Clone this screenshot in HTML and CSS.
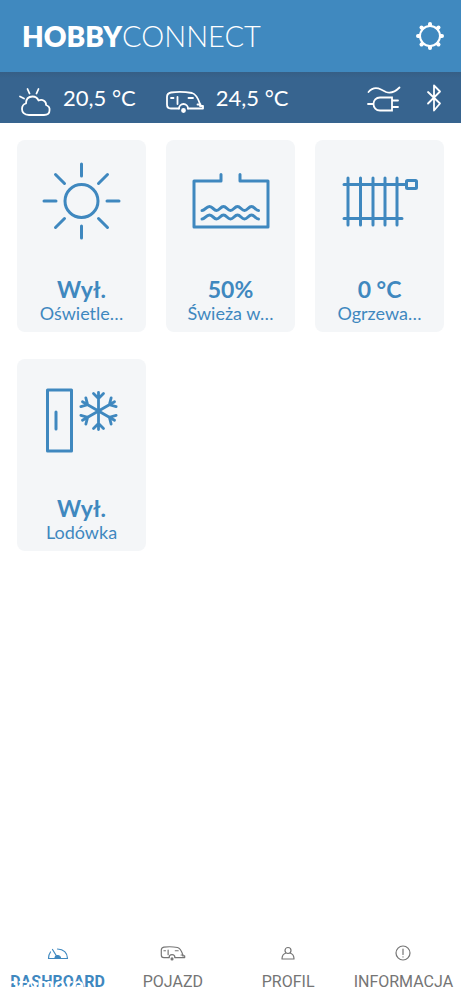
FILE: index.html
```html
<!DOCTYPE html>
<html lang="pl">
<head>
<meta charset="utf-8">
<meta name="viewport" content="width=device-width, initial-scale=1">
<title>HobbyConnect</title>
<link rel="stylesheet" href="styles.css">
</head>
<body>
<header class="topbar">
  <h1 class="brand"><b>HOBBY</b>CONNECT</h1>
  <button class="icon-button" type="button" aria-label="Ustawienia">
    <svg width="30" height="30" viewBox="0 0 30 30" fill="none" stroke="currentColor" stroke-linecap="round">
      <circle cx="15" cy="15" r="10" stroke-width="2"/>
      <path stroke-width="4" d="M15 4V3M15 26v1M4 15H3M26 15h1M7.2 7.2l-.7-.7M22.8 7.2l.7-.7M7.2 22.8l-.7.7M22.8 22.8l.7.7"/>
    </svg>
  </button>
</header>

<section class="status" aria-label="Status">
  <div class="reading">
    <svg width="34" height="30" viewBox="0 0 34 30" fill="none" stroke="currentColor" stroke-width="1.8" stroke-linecap="round" stroke-linejoin="round">
      <path d="M11 28C6 28 4 25 4 22c0-3 2-5 4-5.500C8 12 10 9.500 14.500 9.500c3 0 5 1.500 6 4 4-2 8 1 7.500 4.500 2.500 1 4 3 3.500 5.500 0 3-2.500 4.500-5.500 4.500z"/>
      <path d="M2 9.500l4 2M9.500 2l2 4.500M20.500 2l-2 4.500"/>
    </svg>
    <span>20,5 °C</span>
  </div>
  <div class="reading">
    <svg width="40" height="24" viewBox="0 0 40 24" fill="none" stroke="currentColor" stroke-width="1.8" stroke-linecap="round" stroke-linejoin="round">
      <path d="M14 18.500H6c-3 0-4-1-4-4V7c0-3 1-4 4-4.500Q16 1 27 3c4 1 6 5 8 11v2h3v2.500H23"/>
      <path d="M14 18.500a4.500 4.500 0 0 1 9 0M6 8h2.500M12.500 7v7M23.500 8h4.500M32.500 14.500h3"/>
      <circle cx="18.500" cy="20.500" r="1.500" fill="currentColor"/>
    </svg>
    <span>24,5 °C</span>
  </div>
  <div class="links">
    <svg width="34" height="32" viewBox="0 -4 34 32" fill="none" stroke="currentColor" stroke-width="1.8" stroke-linecap="round">
      <path d="M1.500 6C5 2 9 1 14 3.500l5 2.500c5 2 9 0 13.500-4.500"/>
      <path d="M1 18h5M25 11.500v13H13c-4 0-6.500-3-6.500-6.500s2.500-6.500 6.500-6.500zM26 14.500h5M26 21h5"/>
    </svg>
    <svg width="18" height="30" viewBox="0 0 18 30" fill="none" stroke="currentColor" stroke-width="1.8" stroke-linejoin="round" stroke-linecap="round">
      <path d="M3 9l12 11.500-6 7V2.500l6 6L3 20.500"/>
    </svg>
  </div>
</section>

<main class="cards">
  <button class="card" type="button">
    <svg class="art" viewBox="0 0 90 90">
      <circle cx="44.500" cy="45" r="16.500"/>
      <path d="M44.500 8v12M44.500 70v12M7 45h12M70 45h12M18.500 18.500l9 9M70.500 18.500l-9 9M18.500 71.500l9-9M70.500 71.500l-9-9"/>
    </svg>
    <strong>Wył.</strong>
    <span>Oświetle…</span>
  </button>
  <button class="card" type="button">
    <svg class="art" viewBox="0 0 90 90">
      <path d="M35 18.500V25H8v46h74V25H54v-6.500"/>
      <path d="M16 54.500c3 0 4-4 7.500-4s4 4 7 4 4-4 7-4 4 4 7 4 4-4 7-4 4 4 7 4 4-4 7-4 4 4 7 4M16 63c3 0 4-4 7.500-4s4 4 7 4 4-4 7-4 4 4 7 4 4-4 7-4 4 4 7 4 4-4 7-4 4 4 7 4"/>
    </svg>
    <strong>50%</strong>
    <span>Świeża w…</span>
  </button>
  <button class="card" type="button">
    <svg class="art" viewBox="0 0 90 90">
      <path d="M13 22v47M25.500 22v47M38 22v47M50 22v47M62 22v47M9 28.500h61M9 62.500h58"/>
      <rect x="71.500" y="24.500" width="10" height="8" rx="1"/>
    </svg>
    <strong>0 °C</strong>
    <span>Ogrzewa…</span>
  </button>
  <button class="card" type="button">
    <svg class="art" viewBox="0 0 90 90">
      <path d="M10.500 15h24v61h-24zM19 37v17"/>
      <g stroke-width="2.800">
        <path id="arm" d="M61.500 36V17.500M56.500 18.500l5 5 5-5"/>
        <use href="#arm" transform="rotate(60 61.500 36)"/>
        <use href="#arm" transform="rotate(120 61.500 36)"/>
        <use href="#arm" transform="rotate(180 61.500 36)"/>
        <use href="#arm" transform="rotate(240 61.500 36)"/>
        <use href="#arm" transform="rotate(300 61.500 36)"/>
      </g>
    </svg>
    <strong>Wył.</strong>
    <span>Lodówka</span>
  </button>
</main>

<nav class="tabs">
  <a class="tab active" href="#dashboard" aria-current="page">
    <svg width="22" height="18" viewBox="0 0 22 18" fill="none" stroke="currentColor" stroke-width="1.2" stroke-linecap="round" stroke-linejoin="round">
      <path d="M3.500 7C2 9 1.500 11 1.500 13.500h19C20.500 8 16.500 4 10.500 4"/>
      <path d="M5.500 4.500l4 6.500"/>
      <path d="M8 13.500c0-2 1-3 2.500-3s3 1 3 3z" fill="currentColor"/>
    </svg>
    <span>DASHBOARD</span>
    <span class="watermark">otomoto</span>
  </a>
  <a class="tab" href="#pojazd">
    <svg width="26" height="18" viewBox="0 0 40 26" fill="none" stroke="currentColor" stroke-width="1.8" stroke-linecap="round" stroke-linejoin="round">
      <path d="M14 18.500H6c-3 0-4-1-4-4V7c0-3 1-4 4-4.500Q16 1 27 3c4 1 6 5 8 11v2h3v2.500H23"/>
      <path d="M14 18.500a4.500 4.500 0 0 1 9 0M6 8h2.500M12.500 7v7M23.500 8h4.500M32.500 14.500h3"/>
      <circle cx="18.500" cy="20.500" r="1.500" fill="currentColor"/>
    </svg>
    <span>POJAZD</span>
  </a>
  <a class="tab" href="#profil">
    <svg width="18" height="18" viewBox="0 0 18 18" fill="none" stroke="currentColor" stroke-width="1.2" stroke-linejoin="round">
      <circle cx="9" cy="5.500" r="3"/>
      <path d="M7 8c-2.500.7-4 2.500-4 6h12c0-3.500-1.500-5.300-4-6"/>
    </svg>
    <span>PROFIL</span>
  </a>
  <a class="tab" href="#informacja">
    <svg width="18" height="18" viewBox="0 0 18 18" fill="none" stroke="currentColor" stroke-width="1.2" stroke-linecap="round">
      <circle cx="9" cy="8" r="7"/>
      <path d="M9 4v5.500M9 11.800v.2"/>
    </svg>
    <span>INFORMACJA</span>
  </a>
</nav>
</body>
</html>
```
FILE: styles.css
```css
* {
  box-sizing: border-box;
}

body {
  margin: 0;
  min-height: 100vh;
  display: flex;
  flex-direction: column;
  background: #fff;
  color: #3f88bf;
  font-family: Lato, "Liberation Sans", sans-serif;
}

svg {
  display: block;
  flex: none;
}

button {
  border: 0;
  color: inherit;
  font: inherit;
  cursor: pointer;
}

.topbar {
  display: flex;
  align-items: center;
  justify-content: space-between;
  height: 72px;
  padding: 0 16px 0 22px;
  background: #4089bf;
  color: #fff;
}

.brand {
  margin: 0;
  font-size: 29px;
  font-weight: 300;
  line-height: 36px;
}

.brand b {
  font-size: 28px;
  font-weight: 800;
}

.icon-button {
  padding: 0;
  background: none;
}

.status {
  display: flex;
  align-items: center;
  gap: 29px;
  height: 51px;
  padding: 0 18px;
  background: linear-gradient(#365f86, #37648f 6px);
  color: #fff;
  font-size: 22px;
  line-height: 28px;
}

.reading {
  display: flex;
  align-items: center;
  gap: 11px;
}

.reading svg {
  margin-top: 8px;
}

.links {
  display: flex;
  align-items: center;
  gap: 24px;
  margin-left: auto;
}

.cards {
  flex: 1;
  display: grid;
  grid-template-columns: repeat(3, 1fr);
  align-content: start;
  gap: 27px 20px;
  padding: 17px;
}

.card {
  display: flex;
  flex-direction: column;
  align-items: center;
  min-width: 0;
  height: 192px;
  padding: 16px 8px 8px;
  border-radius: 8px;
  background: #f4f6f8;
}

.art {
  width: 90px;
  height: 90px;
  margin-bottom: auto;
  fill: none;
  stroke: currentColor;
  stroke-width: 3;
  stroke-linecap: round;
  stroke-linejoin: round;
}

.card strong {
  font-size: 23px;
  font-weight: 700;
  line-height: 26px;
}

.card span {
  font-size: 18px;
  line-height: 22px;
}

.tabs {
  display: grid;
  grid-template-columns: repeat(4, 1fr);
  padding: 8px 0 7px;
}

.tab {
  position: relative;
  display: flex;
  flex-direction: column;
  align-items: center;
  gap: 9px;
  color: #757575;
  font-family: Roboto, sans-serif;
  font-size: 16px;
  line-height: 20px;
  text-decoration: none;
}

.tab.active {
  color: #3f88bf;
  font-weight: 700;
}

.watermark {
  position: absolute;
  left: 7px;
  bottom: -2px;
  color: #fff;
  font-family: Lato, sans-serif;
  font-size: 20px;
}
```
